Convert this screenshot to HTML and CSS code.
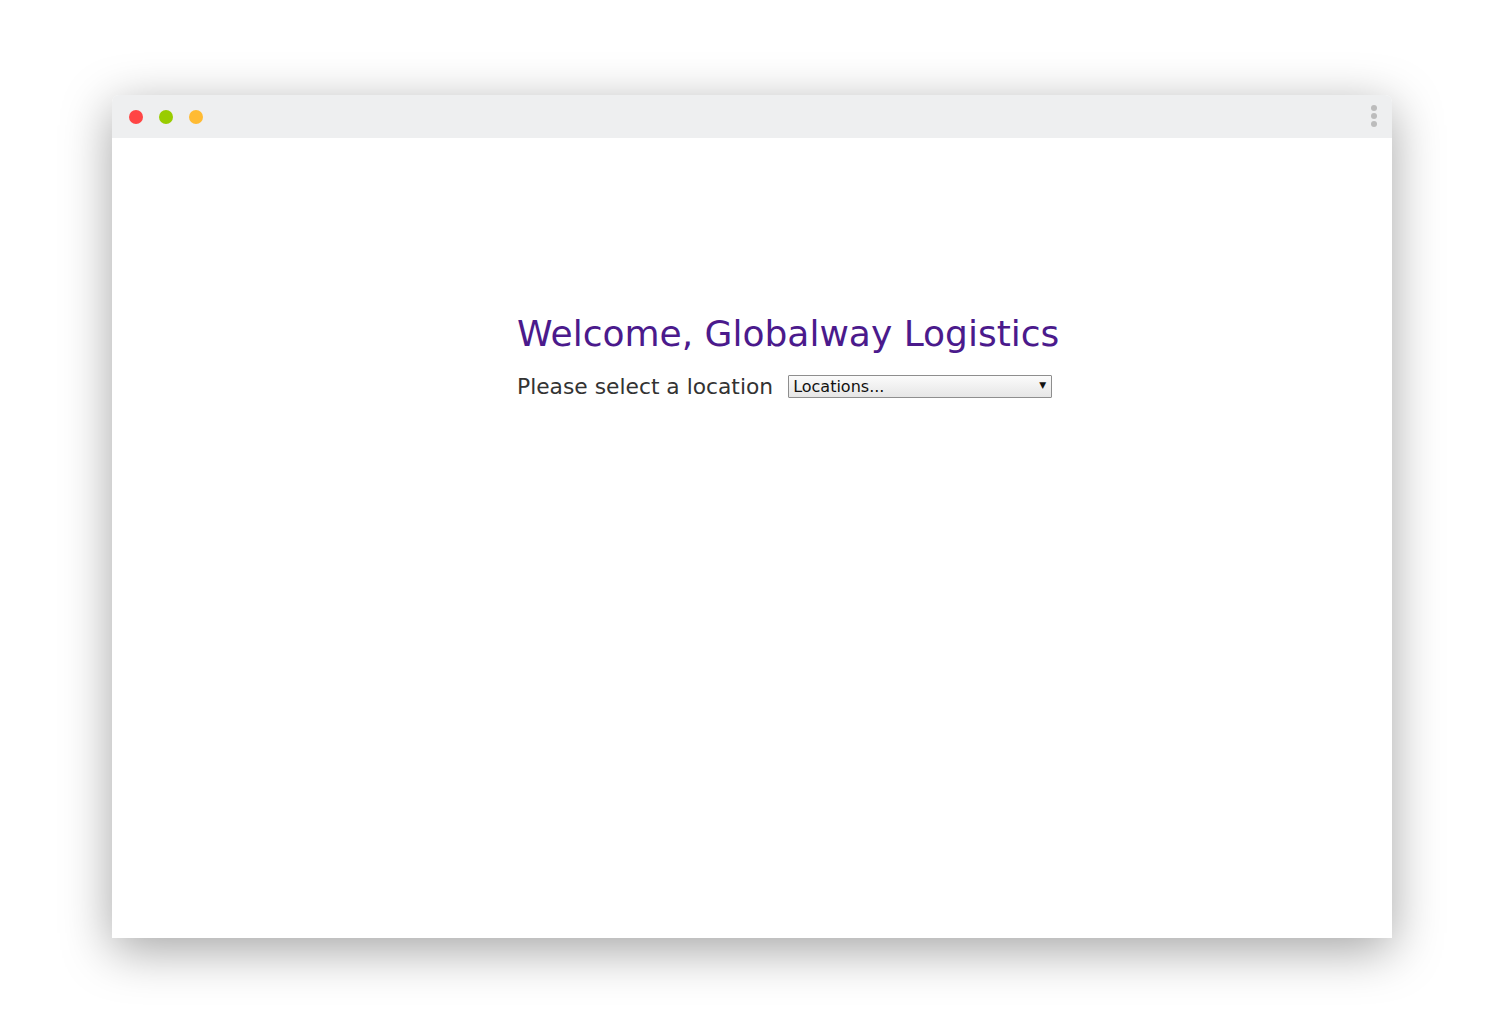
FILE: index.html
```html
<!DOCTYPE html>
<html lang="en">
<head>
<meta charset="utf-8">
<title>Globalway Logistics</title>
<link rel="stylesheet" href="styles.css">
</head>
<body>
<div class="stage">
  <div class="window">
    <div class="titlebar">
      <div class="dots">
        <span class="dot dot-red"></span>
        <span class="dot dot-green"></span>
        <span class="dot dot-yellow"></span>
      </div>
      <div class="kebab">
        <span></span><span></span><span></span>
      </div>
    </div>
    <div class="content">
      <div class="welcome">
        <h1 class="title">Welcome, Globalway Logistics</h1>
        <div class="location-row">
          <label class="location-label" for="loc">Please select a location</label>
          <div class="select-wrap">
            <select id="loc" class="location-select">
              <option>Locations...</option>
            </select>
            <span class="select-arrow">▼</span>
          </div>
        </div>
      </div>
    </div>
  </div>
</div>
</body>
</html>
```

FILE: styles.css
```css
html, body {
  margin: 0;
  padding: 0;
  background: #ffffff;
}

body {
  font-family: "DejaVu Sans", "Liberation Sans", sans-serif;
}

.stage {
  padding: 95px 112px 80px 112px;
}

.window {
  width: 1280px;
  height: 843px;
  background: #ffffff;
  border-radius: 7px 7px 0 0;
  box-shadow: 0 12px 50px rgba(0, 0, 0, 0.36);
  display: flex;
  flex-direction: column;
  overflow: hidden;
}

.titlebar {
  height: 43px;
  background: #eeeff0;
  display: flex;
  align-items: center;
  justify-content: space-between;
  padding: 0 15px 0 17px;
  flex-shrink: 0;
}

.dots {
  display: flex;
  gap: 16px;
}

.dot {
  width: 14px;
  height: 14px;
  border-radius: 50%;
  display: block;
}

.dot-red { background: #ff4545; }
.dot-green { background: #99cc00; }
.dot-yellow { background: #ffbb33; }

.kebab {
  display: flex;
  flex-direction: column;
  gap: 2px;
  margin-top: -1px;
}

.kebab span {
  width: 6px;
  height: 6px;
  border-radius: 50%;
  background: #bcbcbc;
  display: block;
}

.content {
  flex: 1;
  background: #ffffff;
  padding-top: 175px;
}

.welcome {
  margin-left: 405px;
}

.title {
  margin: 0;
  font-size: 36px;
  font-weight: normal;
  color: #4b1a8c;
  line-height: 42px;
}

.location-row {
  display: flex;
  align-items: center;
  gap: 15px;
  margin-top: 19px;
}

.location-label {
  font-size: 21.8px;
  color: #333333;
}

.select-wrap {
  position: relative;
  width: 264px;
  height: 23px;
}

.location-select {
  appearance: none;
  -webkit-appearance: none;
  width: 264px;
  height: 23px;
  margin: 0;
  padding: 0 20px 0 4px;
  border: 1px solid #8e8e8e;
  border-radius: 1px;
  background: linear-gradient(#fbfbfb, #e6e6e6);
  font-family: "DejaVu Sans", sans-serif;
  font-size: 16px;
  color: #111111;
}

.select-arrow {
  position: absolute;
  right: 6px;
  top: 5px;
  font-size: 9px;
  color: #111111;
  pointer-events: none;
}
```
